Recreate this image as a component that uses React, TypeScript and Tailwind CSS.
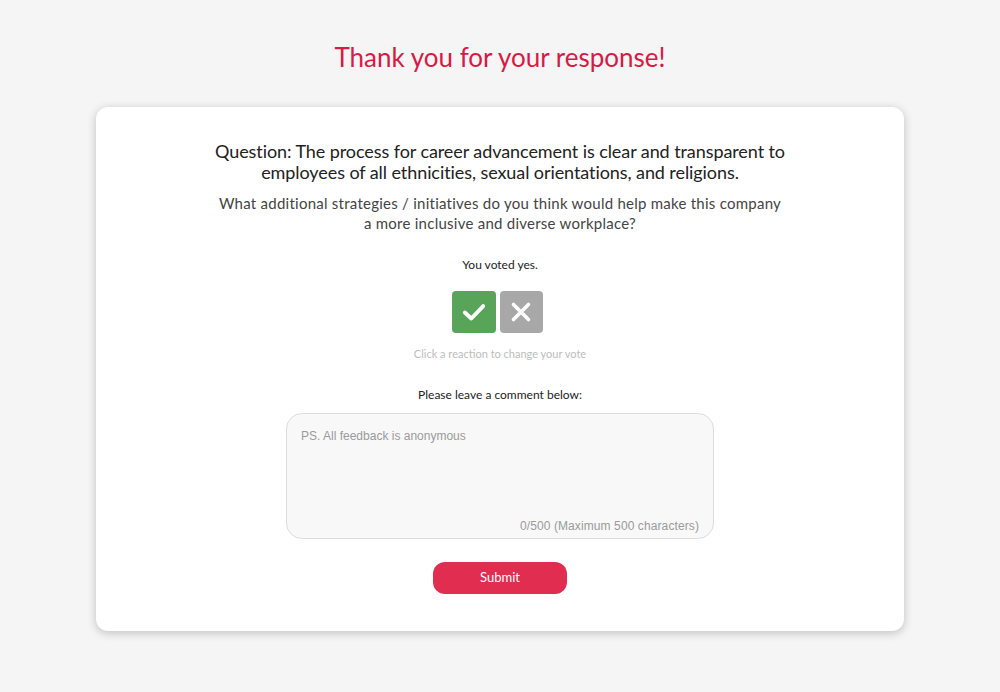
import React from "react";

export default function App() {
  return (
    <div className="min-h-[692px] w-full bg-[#f5f5f5] flex flex-col items-center" style={{ fontFamily: "Lato, 'Liberation Sans', sans-serif" }}>
      <h1 className="mt-[39px] text-[26px] leading-[36px] text-[#d81b45] font-normal">Thank you for your response!</h1>
      <div className="mt-[32px] w-[808px] h-[524px] bg-white rounded-[12px] shadow-[0_2px_10px_rgba(0,0,0,0.22)] flex flex-col items-center">
        <p className="mt-[34px] w-[600px] text-center text-[18px] leading-[21px] text-[#222] tracking-[-0.08px]">
          Question: The process for career advancement is clear and transparent to employees of all ethnicities, sexual orientations, and religions.
        </p>
        <p className="mt-[10px] text-center text-[15px] leading-[20px] text-[#444] tracking-[0.25px]">
          What additional strategies / initiatives do you think would help make this company
          <br />
          a more inclusive and diverse workplace?
        </p>
        <p className="mt-[24px] text-[12px] leading-[16px] text-[#222]">You voted yes.</p>
        <div className="mt-[18px] mr-[6px] flex gap-[4px]">
          <button className="w-[44px] h-[42px] rounded-[4px] bg-[#58a55a] flex items-center justify-center">
            <svg width="26" height="26" viewBox="0 0 24 24" fill="none" stroke="white" strokeWidth="3.6" strokeLinecap="round" strokeLinejoin="round">
              <path d="M3.5 12.5 L9.5 18 L20.5 6.5" />
            </svg>
          </button>
          <button className="w-[43px] h-[42px] rounded-[4px] bg-[#a8a8a8] flex items-center justify-center">
            <svg width="24" height="24" viewBox="0 0 24 24" fill="none" stroke="white" strokeWidth="3.6" strokeLinecap="round">
              <path d="M4.5 4.5 L19.5 19.5 M19.5 4.5 L4.5 19.5" />
            </svg>
          </button>
        </div>
        <p className="mt-[13px] text-[11px] leading-[16px] text-[#bdbdbd]">Click a reaction to change your vote</p>
        <p className="mt-[25px] text-[12px] leading-[16px] text-[#222]">Please leave a comment below:</p>
        <div className="mt-[10px] w-[428px] h-[126px] rounded-[16px] border border-[#dcdcdc] bg-[#f8f8f8] flex flex-col justify-between px-[14px] pt-[15px] pb-[5px]" style={{ fontFamily: "'Liberation Sans', Arial, sans-serif" }}>
          <span className="text-[12px] leading-[14px] text-[#9a9a9a]">PS. All feedback is anonymous</span>
          <span className="self-end text-[12px] leading-[14px] text-[#9a9a9a] tracking-[0.1px]">0/500 (Maximum 500 characters)</span>
        </div>
        <button className="mt-[23px] w-[134px] h-[32px] rounded-[12px] bg-[#e02d50] text-white text-[13px]">Submit</button>
      </div>
    </div>
  );
}
